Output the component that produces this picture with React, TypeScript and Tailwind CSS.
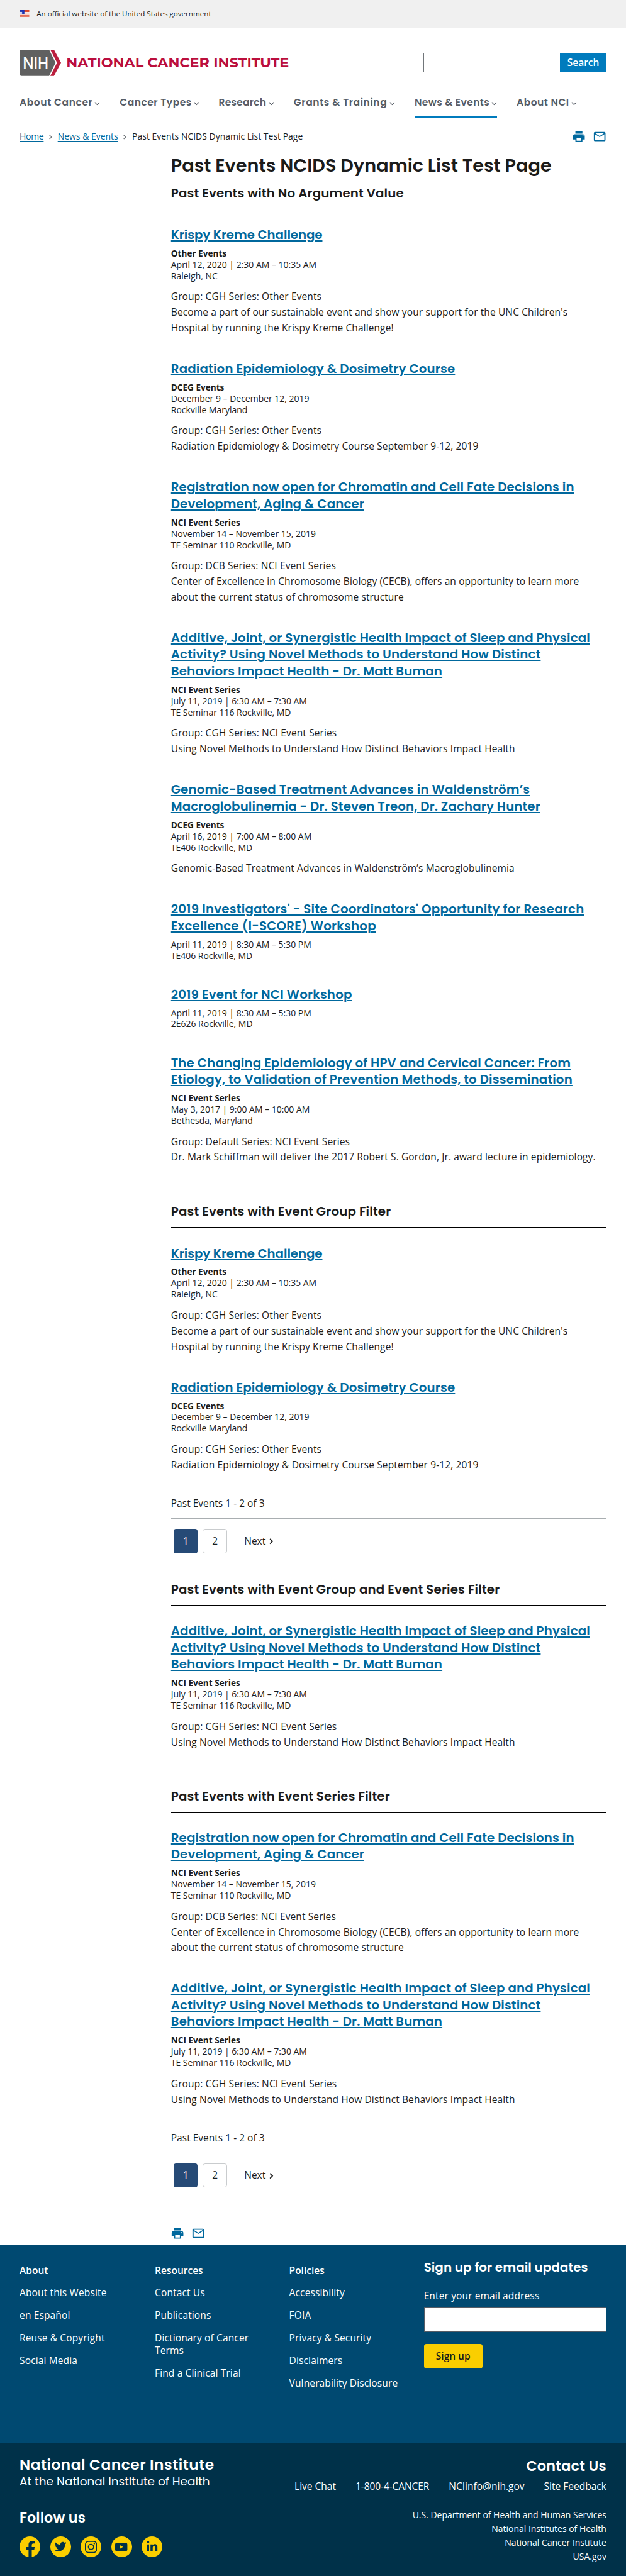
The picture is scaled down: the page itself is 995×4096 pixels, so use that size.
import React from "react";
import { MdPrint, MdMailOutline } from "react-icons/md";
import { FaFacebookF, FaTwitter, FaLinkedinIn } from "react-icons/fa";

const HEAD = "font-['Poppins','Inter',sans-serif]";

type EventItem = {
  title: string[];
  tracking: string;
  series?: string;
  date: string;
  place: string;
  body?: string[];
};

const krispy: EventItem = {
  title: ["Krispy Kreme Challenge"],
  tracking: "tracking-[-0.07px]",
  series: "Other Events",
  date: "April 12, 2020 | 2:30 AM – 10:35 AM",
  place: "Raleigh, NC",
  body: [
    "Group: CGH Series: Other Events",
    "Become a part of our sustainable event and show your support for the UNC Children's",
    "Hospital by running the Krispy Kreme Challenge!",
  ],
};
const radiation: EventItem = {
  title: ["Radiation Epidemiology & Dosimetry Course"],
  tracking: "tracking-[0.17px]",
  series: "DCEG Events",
  date: "December 9 – December 12, 2019",
  place: "Rockville Maryland",
  body: ["Group: CGH Series: Other Events", "Radiation Epidemiology & Dosimetry Course September 9-12, 2019"],
};
const registration: EventItem = {
  title: ["Registration now open for Chromatin and Cell Fate Decisions in", "Development, Aging & Cancer"],
  tracking: "tracking-[0.13px]",
  series: "NCI Event Series",
  date: "November 14 – November 15, 2019",
  place: "TE Seminar 110 Rockville, MD",
  body: [
    "Group: DCB Series: NCI Event Series",
    "Center of Excellence in Chromosome Biology (CECB), offers an opportunity to learn more",
    "about the current status of chromosome structure",
  ],
};
const additive: EventItem = {
  title: [
    "Additive, Joint, or Synergistic Health Impact of Sleep and Physical",
    "Activity? Using Novel Methods to Understand How Distinct",
    "Behaviors Impact Health - Dr. Matt Buman",
  ],
  tracking: "tracking-[0.14px]",
  series: "NCI Event Series",
  date: "July 11, 2019 | 6:30 AM – 7:30 AM",
  place: "TE Seminar 116 Rockville, MD",
  body: ["Group: CGH Series: NCI Event Series", "Using Novel Methods to Understand How Distinct Behaviors Impact Health"],
};
const genomic: EventItem = {
  title: ["Genomic-Based Treatment Advances in Waldenström’s", "Macroglobulinemia - Dr. Steven Treon, Dr. Zachary Hunter"],
  tracking: "tracking-[0.13px]",
  series: "DCEG Events",
  date: "April 16, 2019 | 7:00 AM – 8:00 AM",
  place: "TE406 Rockville, MD",
  body: ["Genomic-Based Treatment Advances in Waldenström’s Macroglobulinemia"],
};
const investigators: EventItem = {
  title: ["2019 Investigators' - Site Coordinators' Opportunity for Research", "Excellence (I-SCORE) Workshop"],
  tracking: "tracking-[0.22px]",
  date: "April 11, 2019 | 8:30 AM – 5:30 PM",
  place: "TE406 Rockville, MD",
};
const workshop: EventItem = {
  title: ["2019 Event for NCI Workshop"],
  tracking: "tracking-[0.18px]",
  date: "April 11, 2019 | 8:30 AM – 5:30 PM",
  place: "2E626 Rockville, MD",
};
const changing: EventItem = {
  title: ["The Changing Epidemiology of HPV and Cervical Cancer: From", "Etiology, to Validation of Prevention Methods, to Dissemination"],
  tracking: "tracking-[0.16px]",
  series: "NCI Event Series",
  date: "May 3, 2017 | 9:00 AM – 10:00 AM",
  place: "Bethesda, Maryland",
  body: ["Group: Default Series: NCI Event Series", "Dr. Mark Schiffman will deliver the 2017 Robert S. Gordon, Jr. award lecture in epidemiology."],
};

function Item({ item }: { item: EventItem }) {
  return (
    <article className="mb-[40.4px] whitespace-nowrap">
      <h3 className={`${HEAD} ${item.tracking} text-[20.4px] leading-[27.3px] font-semibold`}>
        {item.title.map((t) => (
          <div key={t}>
            <a className="text-[#00689d] underline decoration-2 underline-offset-[2px]">{t}</a>
          </div>
        ))}
      </h3>
      <div className="mt-[7.6px] text-[14.4px] leading-[18.5px]">
        {item.series && <div className="text-sm leading-[18.5px] font-bold">{item.series}</div>}
        <div>{item.date}</div>
        <div>{item.place}</div>
      </div>
      {item.body && (
        <div className="mt-3 text-base leading-[25.6px] tracking-[0.11px]">
          {item.body.map((b) => (
            <p key={b}>{b}</p>
          ))}
        </div>
      )}
    </article>
  );
}

function Section({ title, height, items, pager }: { title: string; height: string; items: EventItem[]; pager?: boolean }) {
  return (
    <section className={height}>
      <h2 className={`${HEAD} mb-7 border-b border-black pb-[12px] text-[20.4px] leading-[26px] font-semibold tracking-[0.17px]`}>{title}</h2>
      {items.map((it) => (
        <Item key={it.title[0]} item={it} />
      ))}
      {pager && (
        <div className="-mt-[3.2px]">
          <div className="border-b border-[#a9aeb1] pb-3 text-base leading-[25.6px]">Past Events 1 - 2 of 3</div>
          <nav className="mt-4 flex items-center pl-1 text-base">
            <span className="flex size-10 items-center justify-center rounded bg-[#264a76] text-white">1</span>
            <span className="ml-2 flex size-10 items-center justify-center rounded border border-[#c9ccce]">2</span>
            <span className="ml-7">Next</span>
            <svg className="mt-px ml-1.5" width="7" height="10" viewBox="0 0 7 10" fill="none" stroke="#1b1b1b" strokeWidth="1.8">
              <path d="M1.2 1 5.2 5 1.2 9" />
            </svg>
          </nav>
        </div>
      )}
    </section>
  );
}

function Flag() {
  return (
    <svg width="16" height="11" viewBox="0 0 16 11">
      <rect width="16" height="11" fill="#fff" />
      {[0, 2, 4, 6, 8, 10].map((y) => (
        <rect key={y} y={y} width="16" height="1" fill="#db3e1f" />
      ))}
      <rect width="8" height="7" fill="#1e33b1" />
      {[1, 3, 5].map((y) => (
        <g key={y} fill="#fff">
          <rect x="1" y={y} width="1" height="1" />
          <rect x="3" y={y} width="1" height="1" />
          <rect x="5" y={y} width="1" height="1" />
        </g>
      ))}
    </svg>
  );
}

function Logo() {
  return (
    <div className="flex">
      <svg width="68" height="43" viewBox="0 0 68 43" className="overflow-visible">
        <path d="M3.5 0H48.5L59 21.5 48.5 43H3.5A3.5 3.5 0 0 1 0 39.5V3.500A3.5 3.5 0 0 1 3.5 0Z" fill="#606060" />
        <path d="M50.500 0H56.500L68 21.500 56.500 43H50.500L61.500 21.500Z" fill="#bb1f3e" />
        <text x="5.500" y="31.200" fill="#fff" fontFamily="Inter, sans-serif" fontWeight="500" fontSize="25.2" textLength="42" lengthAdjust="spacingAndGlyphs">
          NIH
        </text>
      </svg>
      <span className="ml-[8.5px] pt-[7.5px] font-['Montserrat','Inter',sans-serif] text-[23px] leading-[28px] font-bold whitespace-nowrap text-[#bb0e3d]">NATIONAL CANCER INSTITUTE</span>
    </div>
  );
}

const navItems = [
  { label: "About Cancer", w: "w-[132px]", tracking: "tracking-[0.6px]" },
  { label: "Cancer Types", w: "w-[130px]", tracking: "tracking-[0.52px]" },
  { label: "Research", w: "w-[91px]", tracking: "tracking-[0.25px]" },
  { label: "Grants & Training", w: "w-[166px]", tracking: "tracking-[0.62px]" },
  { label: "News & Events", w: "w-[135px]", tracking: "tracking-[0.42px]", active: true },
  { label: "About NCI", w: "w-[99px]", tracking: "tracking-[0.5px]" },
];

function Chevron() {
  return (
    <svg width="9" height="6" viewBox="0 0 9 6" fill="none" stroke="#565c65" strokeWidth="1.3">
      <path d="M.7.8 4.5 4.600 8.300.8" />
    </svg>
  );
}

function Crumb() {
  return (
    <svg className="mt-px mr-[9px] ml-[9px] shrink-0" width="5" height="8" viewBox="0 0 5 8" fill="none" stroke="#71767a" strokeWidth="1.4">
      <path d="M.7.7 4 4 .7 7.300" />
    </svg>
  );
}

const footerColumns = [
  { title: "About", w: "w-[221.5px]", links: ["About this Website", "en Español", "Reuse & Copyright", "Social Media"] },
  { title: "Resources", w: "w-[220px]", links: ["Contact Us", "Publications", "Dictionary of Cancer Terms", "Find a Clinical Trial"] },
  { title: "Policies", w: "w-[220.5px]", links: ["Accessibility", "FOIA", "Privacy & Security", "Disclaimers", "Vulnerability Disclosure"] },
];

function Circle({ children }: { children: React.ReactNode }) {
  return <span className="flex size-[34px] items-center justify-center overflow-hidden rounded-full bg-[#face00] text-[#003149]">{children}</span>;
}

export default function App() {
  return (
    <div className="h-[4220px] w-[1025px] overflow-hidden bg-white font-['Open_Sans',sans-serif] text-[#1b1b1b] [zoom:0.9707]">
      <div className="flex h-[46px] items-center bg-[#f0f0f0] px-8 pb-[2px]">
        <Flag />
        <span className="ml-3 text-xs leading-4">An official website of the United States government</span>
      </div>

      <header className="px-8">
        <div className="flex h-[109px] items-start justify-between pt-[35px]">
          <Logo />
          <div className="mt-[6px] flex h-8 w-[300px]">
            <div className="h-8 grow border border-r-0 border-[#71767a] bg-white" />
            <button className="h-8 w-[76px] rounded-r bg-[#007bbd] text-base leading-none font-semibold text-white">Search</button>
          </div>
        </div>
        <nav className="flex h-[38px] gap-8">
          {navItems.map((n) => (
            <div key={n.label} className={`${HEAD} ${n.w} ${n.tracking} ${n.active ? "border-[#007bbd]" : "border-transparent"} flex shrink-0 items-start justify-between border-b-4 pt-[1px] text-base leading-6 font-semibold whitespace-nowrap text-[#565c65]`}>
              {n.label}
              <span className="mt-[11px] flex">
                <Chevron />
              </span>
            </div>
          ))}
        </nav>
        <div className="flex h-[61px] items-center justify-between pt-[1px]">
          <div className="flex items-center text-[14.4px] whitespace-nowrap">
            <a className="tracking-[-0.3px] text-[#00689d] underline underline-offset-2">Home</a>
            <Crumb />
            <a className="text-[#00689d] underline underline-offset-2">News & Events</a>
            <Crumb />
            <span>Past Events NCIDS Dynamic List Test Page</span>
          </div>
          <div className="flex gap-[11px] text-[23px] text-[#00689d]">
            <MdPrint />
            <MdMailOutline />
          </div>
        </div>
      </header>

      <main className="ml-[280px] h-[3424px] w-[713px]">
        <h1 className={`${HEAD} h-[49.9px] pt-[-1px] text-[29.6px] leading-[33px] font-semibold whitespace-nowrap`}>Past Events NCIDS Dynamic List Test Page</h1>
        <Section title="Past Events with No Argument Value" height="h-[1668.4px]" items={[krispy, radiation, registration, additive, genomic, investigators, workshop, changing]} />
        <Section title="Past Events with Event Group Filter" height="h-[619.1px]" items={[krispy, radiation]} pager />
        <Section title="Past Events with Event Group and Event Series Filter" height="h-[338.3px]" items={[additive]} />
        <Section title="Past Events with Event Series Filter" height="h-[717.3px]" items={[registration, additive]} pager />
        <div className="-ml-[1px] flex gap-[11px] text-[23px] text-[#00689d]">
          <MdPrint />
          <MdMailOutline />
        </div>
      </main>

      <footer className="text-white">
        <div className="flex h-[324px] bg-[#004971] px-8 pt-[31px]">
          {footerColumns.map((c) => (
            <div key={c.title} className={`${c.w} shrink-0 text-base leading-[21px]`}>
              <div className="mb-[15px] font-semibold">{c.title}</div>
              <ul className="flex w-[190px] flex-col gap-4 tracking-[0.13px]">
                {c.links.map((l) => (
                  <li key={l}>{l}</li>
                ))}
              </ul>
            </div>
          ))}
          <div className="-mt-[9px] w-[299px]">
            <div className={`${HEAD} text-[20.6px] leading-7 font-semibold whitespace-nowrap`}>Sign up for email updates</div>
            <div className="mt-[21px] text-base leading-6 tracking-[0.13px]">Enter your email address</div>
            <div className="mt-[7px] h-10 border border-[#565c65] bg-white" />
            <button className="mt-5 h-10 w-24 rounded bg-[#face00] text-base font-semibold text-[#1b1b1b]">Sign up</button>
          </div>
        </div>

        <div className="flex h-[218px] justify-between bg-[#003149] px-8">
          <div className={`${HEAD} pt-[22px] whitespace-nowrap`}>
            <div className="text-[24px] leading-7 font-semibold tracking-[0.53px]">National Cancer Institute</div>
            <div className="mt-[0.5px] text-[19px] leading-6">At the National Institute of Health</div>
            <div className="mt-[33.5px] text-[23px] leading-7 font-semibold tracking-[0.13px]">Follow us</div>
            <div className="mt-[17px] flex gap-4">
              <Circle>
                <FaFacebookF className="mt-[7px] ml-[1px] h-[27px] w-[17px] shrink-0" />
              </Circle>
              <Circle>
                <FaTwitter size={19} />
              </Circle>
              <Circle>
                <svg width="20" height="20" viewBox="0 0 20 20" fill="none" stroke="currentColor" strokeWidth="1.8">
                  <rect x=".9" y=".9" width="18.2" height="18.2" rx="5" />
                  <circle cx="10" cy="10" r="4.3" />
                  <circle cx="15.3" cy="4.7" r="1.2" fill="currentColor" stroke="none" />
                </svg>
              </Circle>
              <Circle>
                <svg width="20" height="14" viewBox="0 0 20 14">
                  <rect width="20" height="14" rx="3" fill="currentColor" />
                  <path d="M8 4v6l5-3z" fill="#face00" />
                </svg>
              </Circle>
              <Circle>
                <FaLinkedinIn size={20} />
              </Circle>
            </div>
          </div>
          <div className="flex flex-col items-end pt-[24px] text-right whitespace-nowrap">
            <div className={`${HEAD} text-[23px] leading-7 font-semibold tracking-[0.25px]`}>Contact Us</div>
            <div className="mt-[7.3px] flex gap-8 text-base leading-6">
              <span>Live Chat</span>
              <span className="tracking-[-0.1px]">1-800-4-CANCER</span>
              <span>NCIinfo@nih.gov</span>
              <span>Site Feedback</span>
            </div>
            <div className="mt-[22.7px] text-[14.4px] leading-[22.8px]">
              <div>U.S. Department of Health and Human Services</div>
              <div>National Institutes of Health</div>
              <div>National Cancer Institute</div>
              <div>USA.gov</div>
            </div>
          </div>
        </div>
      </footer>
    </div>
  );
}
